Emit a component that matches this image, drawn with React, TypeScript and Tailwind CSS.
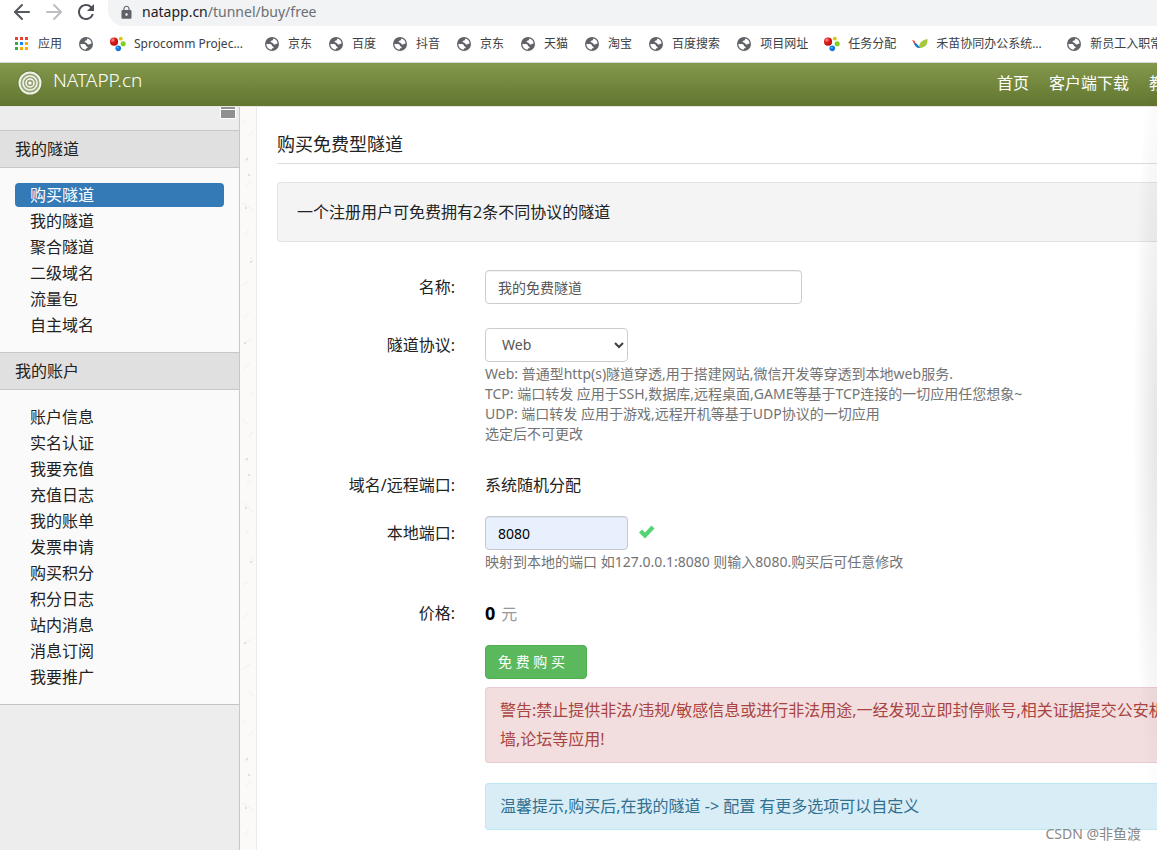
import React from 'react';
import { ArrowLeft, ArrowRight } from 'lucide-react';
import { MdLock, MdRefresh } from 'react-icons/md';

type BookmarkIcon = 'globe' | 'balls' | 'leaf';

const bookmarks: { label: string; icon: BookmarkIcon }[] = [
  { label: '', icon: 'globe' },
  { label: 'Sprocomm Projec...', icon: 'balls' },
  { label: '京东', icon: 'globe' },
  { label: '百度', icon: 'globe' },
  { label: '抖音', icon: 'globe' },
  { label: '京东', icon: 'globe' },
  { label: '天猫', icon: 'globe' },
  { label: '淘宝', icon: 'globe' },
  { label: '百度搜索', icon: 'globe' },
  { label: '项目网址', icon: 'globe' },
  { label: '任务分配', icon: 'balls' },
  { label: '禾苗协同办公系统...', icon: 'leaf' },
  { label: '新员工入职常见问题', icon: 'globe' },
];

const menus = [
  { title: '我的隧道', items: ['购买隧道', '我的隧道', '聚合隧道', '二级域名', '流量包', '自主域名'] },
  {
    title: '我的账户',
    items: ['账户信息', '实名认证', '我要充值', '充值日志', '我的账单', '发票申请', '购买积分', '积分日志', '站内消息', '消息订阅', '我要推广'],
  },
];

const appColors = ['#ea4335', '#ea4335', '#ea4335', '#34a853', '#1a86f5', '#f9ab00', '#34a853', '#f9ab00', '#f9ab00'];

const AppsIcon = () => (
  <svg width="14" height="14" viewBox="0 0 14 14">
    {appColors.map((c, i) => (
      <rect key={i} x={(i % 3) * 5} y={Math.floor(i / 3) * 5} width="3" height="3" fill={c} />
    ))}
  </svg>
);

const GlobeIcon = () => (
  <svg width="16" height="16" viewBox="0 0 16 16">
    <circle cx="8" cy="8" r="7" fill="#5f6368" />
    <path
      d="M2.400 8H5.200C7 8 7.800 8.600 8 9.800C8.200 10.800 9.200 10.600 9.600 10.800C10 11.800 9.200 12.300 8 12.400V13.600C4.800 13.600 2.400 11.200 2.400 8Z"
      fill="#fff"
    />
    <path
      d="M9.500 2.600C11.900 3.100 13.500 5.200 13.600 7.400C12.800 7.400 12.400 7.600 12 8.100C11.100 8.700 9.400 8.400 9.200 7.400C8.800 6.500 7.200 7 6.700 6.200C6.400 5 7.500 4.700 8.500 4.600C9.300 4.200 8.800 3.300 9.500 2.600Z"
      fill="#fff"
    />
  </svg>
);

const BallsIcon = () => (
  <svg width="16" height="16" viewBox="0 0 17 16">
    <defs>
      <radialGradient id="ball-red" cx="0.35" cy="0.3" r="0.8">
        <stop offset="0" stopColor="#ff9a8c" />
        <stop offset="0.4" stopColor="#dd1a1a" />
        <stop offset="1" stopColor="#a80d0d" />
      </radialGradient>
    </defs>
    <circle cx="4.300" cy="5.500" r="4.300" fill="url(#ball-red)" />
    <circle cx="11.500" cy="2.300" r="2.100" fill="#dcc51e" />
    <circle cx="14" cy="7.700" r="2.700" fill="#7fd01c" />
    <circle cx="8.800" cy="12.600" r="3" fill="#1277dc" />
    <circle cx="8.200" cy="11.800" r="1" fill="#6fb9f7" />
  </svg>
);

const LeafIcon = () => (
  <svg width="16" height="16" viewBox="0 0 16 16">
    <path d="M7 12C7 7 9.500 4 15.500 3C16 8.500 12.500 12.500 7 12Z" fill="#a4c93a" />
    <path d="M1.500 6C4 6.500 6 8.500 8 12C5 12.500 2.500 10 1.500 6Z" fill="#1e78c8" />
    <path d="M0 4L3 5L2.500 8Z" fill="#e8452f" />
  </svg>
);

const Favicon = ({ icon }: { icon: BookmarkIcon }) => {
  if (icon === 'balls') return <BallsIcon />;
  if (icon === 'leaf') return <LeafIcon />;
  return <GlobeIcon />;
};

const BrowserBar = () => (
  <div className="border-b border-[#d5d8de] bg-white">
    <div className="flex h-[26px] items-center">
      <div className="flex w-[108px] shrink-0 items-center gap-2 pb-0.5 pl-2.5">
        <button aria-label="后退">
          <ArrowLeft className="size-6 text-[#55585d]" />
        </button>
        <button aria-label="前进">
          <ArrowRight className="size-6 text-[#bcbec1]" />
        </button>
        <button aria-label="刷新">
          <MdRefresh className="size-6 text-[#4d5156]" />
        </button>
      </div>
      <div className="flex h-full flex-1 items-center gap-2 rounded-bl-2xl bg-[#f1f3f4] pb-0.5 pl-[11px]">
        <MdLock className="size-[15px] text-[#5f6368]" />
        <span className="text-sm text-[#6b6f73]">
          <span className="text-[#202124]">natapp.cn</span>/tunnel/buy/free
        </span>
      </div>
    </div>
    <nav className="flex h-9 items-center gap-4 pl-[15px] text-xs whitespace-nowrap text-[#3c4043]">
      <a href="#" className="flex shrink-0 items-center gap-[9px]">
        <AppsIcon />
        应用
      </a>
      {bookmarks.map((b, i) => (
        <a key={i} href="#" className="flex shrink-0 items-center gap-2" aria-label={b.label || '书签'}>
          <Favicon icon={b.icon} />
          {b.label && <span className={b.label.endsWith('...') ? 'w-[114px]' : undefined}>{b.label}</span>}
        </a>
      ))}
    </nav>
  </div>
);

const Logo = () => (
  <svg width="26" height="26" viewBox="0 0 26 26" fill="none">
    <circle cx="13" cy="13" r="12.500" fill="#687a3a" />
    <circle cx="13" cy="13" r="10.500" fill="#97a476" stroke="#eff2e8" strokeWidth="2" />
    <circle cx="13" cy="13" r="7" stroke="#f1f4ea" strokeWidth="1.600" />
    <circle cx="13" cy="13" r="4" stroke="#f6f8f2" strokeWidth="1.500" />
    <circle cx="13" cy="13" r="1.600" fill="#ffffff" />
  </svg>
);

const Header = () => (
  <header className="flex h-[43px] items-center justify-between overflow-hidden bg-linear-to-b from-[#84994c] to-[#61752f] pb-1 text-white">
    <a href="#" className="flex items-center gap-2.5 pl-[17px] text-[19px] font-light">
      <Logo />
      <span className="pb-1">NATAPP.cn</span>
    </a>
    <nav className="-mr-6 flex gap-5 text-base whitespace-nowrap">
      <a href="#">首页</a>
      <a href="#">客户端下载</a>
      <a href="#">教程</a>
    </nav>
  </header>
);

const Sidebar = () => (
  <aside className="w-60 shrink-0 border-r border-[#c8c8c8] bg-[#ededed]">
    <div className="flex h-[23px] items-start justify-end pr-[3px]">
      <button aria-label="收起菜单" className="flex flex-col gap-px border border-t-0 border-white bg-white">
        <span className="h-0.5 w-3.5 bg-[#909090]" />
        <span className="h-2 w-3.5 bg-[#909090]" />
      </button>
    </div>
    {menus.map((menu, m) => (
      <section key={menu.title}>
        <h2 className="h-[38px] border-y border-[#c8c8c8] bg-[#e0e0e0] pl-[15px] text-base leading-9">{menu.title}</h2>
        <ul className="flex flex-col gap-0.5 bg-[#fafafa] px-[15px] py-[15px]">
          {menu.items.map((item, i) => (
            <li key={item}>
              <a
                href="#"
                className={
                  m === 0 && i === 0
                    ? 'block rounded-sm bg-[#337ab7] pl-[15px] text-base leading-6 text-white'
                    : 'block pl-[15px] text-base leading-6'
                }
              >
                {item}
              </a>
            </li>
          ))}
        </ul>
      </section>
    ))}
    <div className="border-t border-[#c4c4c4]" />
  </aside>
);

// speckled paper texture between the sidebar and the page
const PaperStrip = () => (
  <div className="w-[17px] shrink-0 overflow-hidden border-r border-[#ebebeb] bg-[#fbfaf8]">
    <svg width="16" height="100%">
      <defs>
        <pattern id="paper" width="16" height="300" patternUnits="userSpaceOnUse">
          <g fill="none" stroke="#f1efec">
            <path d="M2 12l5 5M9 30l4-6M3 52l6 3M11 74l-5 5M2 96l7 4 4 5M5 128l4-6M10 150l4 5M3 178l6-4M9 205l-5 6M12 232l-6 3M3 262l7-5M9 284l4 5" />
          </g>
          <g fill="#d9d7d3">
            <circle cx="7" cy="52" r="1" />
            <circle cx="9" cy="68" r="1" />
            <circle cx="6" cy="101" r="1" />
            <circle cx="11" cy="155" r="1" />
            <circle cx="5" cy="236" r="1" />
          </g>
        </pattern>
      </defs>
      <rect width="16" height="100%" fill="url(#paper)" />
    </svg>
  </div>
);

const Row = ({ label, htmlFor, children }: { label: string; htmlFor?: string; children: React.ReactNode }) => (
  <div className="flex gap-[30px]">
    <label htmlFor={htmlFor} className="w-[178px] shrink-0 text-right text-base leading-[34px]">
      {label}
    </label>
    <div className="min-w-0 flex-1">{children}</div>
  </div>
);

const BuyForm = () => (
  <form className="flex flex-col pt-7" onSubmit={e => e.preventDefault()}>
    <Row label="名称:" htmlFor="name">
      <input
        id="name"
        defaultValue="我的免费隧道"
        className="block h-[34px] w-[317px] rounded-sm border border-[#cccccc] px-3 text-sm text-[#555555] inset-shadow-2xs"
      />
    </Row>
    <div className="pt-6">
      <Row label="隧道协议:" htmlFor="protocol">
        <div className="relative w-[143px]">
          <select
            id="protocol"
            className="block h-[34px] w-full appearance-none rounded-sm border border-[#cccccc] bg-white px-4 text-sm text-[#555555]"
          >
            <option>Web</option>
            <option>TCP</option>
            <option>UDP</option>
          </select>
          <svg className="pointer-events-none absolute top-3 right-1" width="10" height="10" viewBox="0 0 10 10" fill="none">
            <path d="M1 3l4 4 4-4" stroke="#404040" strokeWidth="2" />
          </svg>
        </div>
        <p className="pt-0.5 text-sm leading-5 whitespace-nowrap text-[#737373]">
          Web: 普通型http(s)隧道穿透,用于搭建网站,微信开发等穿透到本地web服务.
          <br />
          TCP: 端口转发 应用于SSH,数据库,远程桌面,GAME等基于TCP连接的一切应用任您想象~
          <br />
          UDP: 端口转发 应用于游戏,远程开机等基于UDP协议的一切应用
          <br />
          选定后不可更改
        </p>
      </Row>
    </div>
    <div className="pt-6">
      <Row label="域名/远程端口:">
        <p className="text-base leading-[34px]">系统随机分配</p>
      </Row>
    </div>
    <div className="pt-3.5">
      <Row label="本地端口:" htmlFor="port">
        <div className="flex items-center gap-2.5">
          <input
            id="port"
            defaultValue="8080"
            className="block h-[34px] w-[143px] rounded-sm border border-[#c4c7cc] bg-[#e8f0fe] px-3 text-sm text-black inset-shadow-2xs"
          />
          <svg width="18" height="16" viewBox="0 0 18 16">
            <path d="M1 7.500L4 4.500L7 7.500L13.500 0.500L16.500 3.500L7 13.500Z" fill="#53d571" />
          </svg>
        </div>
        <p className="pt-0.5 text-sm leading-5 whitespace-nowrap text-[#737373]">
          映射到本地的端口 如127.0.0.1:8080 则输入8080.购买后可任意修改
        </p>
      </Row>
    </div>
    <div className="pt-6">
      <Row label="价格:">
        <p className="flex items-baseline gap-1.5">
          <strong className="text-lg leading-[34px] text-black">0</strong>
          <span className="text-base leading-[34px] text-[#999999]">元</span>
        </p>
      </Row>
    </div>
    <div className="flex flex-col items-start pt-3.5 pl-[208px]">
      <button className="h-[34px] w-[102px] rounded-sm border border-[#4cae4c] bg-[#5cb85c] px-3 text-left text-sm text-white">
        免 费 购 买
      </button>
      <div className="mt-2 w-full rounded-l-sm border border-r-0 border-[#ebccd1] bg-[#f2dede] px-3.5 py-2 text-base leading-[29px] whitespace-nowrap text-[#a94442]">
        警告:禁止提供非法/违规/敏感信息或进行非法用途,一经发现立即封停账号,相关证据提交公安机关
        <br />
        墙,论坛等应用!
      </div>
      <div className="mt-5 w-full rounded-l-sm border border-r-0 border-[#bce8f1] bg-[#d9edf7] px-3.5 py-2 text-base leading-[29px] whitespace-nowrap text-[#31708f]">
        温馨提示,购买后,在我的隧道 -&gt; 配置 有更多选项可以自定义
      </div>
    </div>
  </form>
);

export default function App() {
  return (
    <div className="relative flex h-screen flex-col overflow-hidden bg-white font-['Noto_Sans','Noto_Sans_CJK_SC',sans-serif] text-[#222222]">
      <BrowserBar />
      <Header />
      <div className="flex min-h-0 flex-1 border-t border-[#e6e6e6]">
        <Sidebar />
        <PaperStrip />
        <main className="min-w-0 flex-1 overflow-hidden pl-5">
          <h1 className="border-b border-[#dcdcdc] pt-6 pb-1.5 text-lg leading-[26px]">购买免费型隧道</h1>
          <div className="mt-[18px] rounded-l-sm border border-r-0 border-[#e3e3e3] bg-[#f4f4f4] p-[19px] text-base leading-5">
            一个注册用户可免费拥有2条不同协议的隧道
          </div>
          <BuyForm />
        </main>
      </div>
      <div className="pointer-events-none absolute top-12 right-0 bottom-8 w-6 bg-[radial-gradient(farthest-side_at_100%_50%,rgba(0,0,0,0.1),transparent)]" />
      <div className="pointer-events-none absolute right-4 bottom-1.5 text-sm text-[#888888]">CSDN @非鱼渡</div>
    </div>
  );
}
